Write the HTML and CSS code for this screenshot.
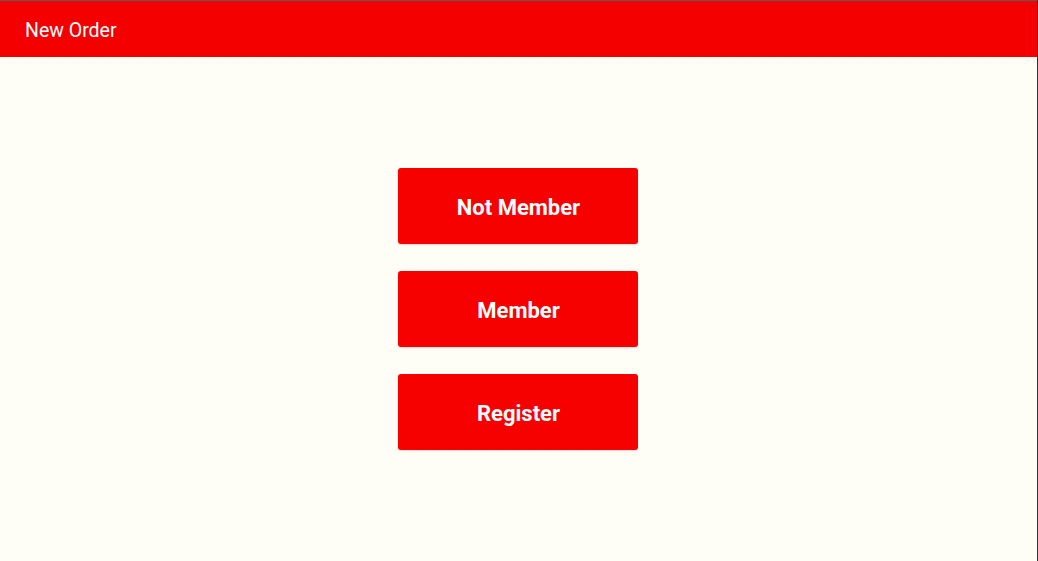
FILE: index.html
```html
<!DOCTYPE html>
<html>
<head>
<meta charset="utf-8">
<link rel="stylesheet" href="styles.css">
</head>
<body>
<div class="frame">
  <header class="topbar">New Order</header>
  <main class="content">
    <button class="choice">Not Member</button>
    <button class="choice">Member</button>
    <button class="choice">Register</button>
  </main>
</div>
</body>
</html>
```
FILE: styles.css
```css
html, body {
  margin: 0;
  padding: 0;
  height: 100%;
}
body {
  background: #fffef6;
  font-family: Roboto, "Liberation Sans", sans-serif;
}
.frame {
  box-sizing: border-box;
  height: 561px;
  border-top: 1px solid #5a5a5a;
  border-right: 1px solid #333333;
  display: flex;
  flex-direction: column;
}
.topbar {
  height: 56px;
  flex-shrink: 0;
  background: #f50000;
  color: #ffffff;
  font-size: 19.5px;
  display: flex;
  align-items: center;
  padding-left: 25px;
  padding-top: 2px;
  box-sizing: border-box;
}
.content {
  display: flex;
  flex-direction: column;
  align-items: center;
  gap: 27px;
  padding-top: 111px;
  padding-right: 2px;
}
.choice {
  width: 240px;
  height: 76px;
  border: none;
  border-radius: 3px;
  background: #f70000;
  color: #ffffff;
  font-family: Roboto, "Liberation Sans", sans-serif;
  font-weight: 700;
  font-size: 22px;
  padding: 2px 0 0 2px;
  box-shadow: 0 1px 2px rgba(0,0,0,0.15);
  cursor: pointer;
}
```
